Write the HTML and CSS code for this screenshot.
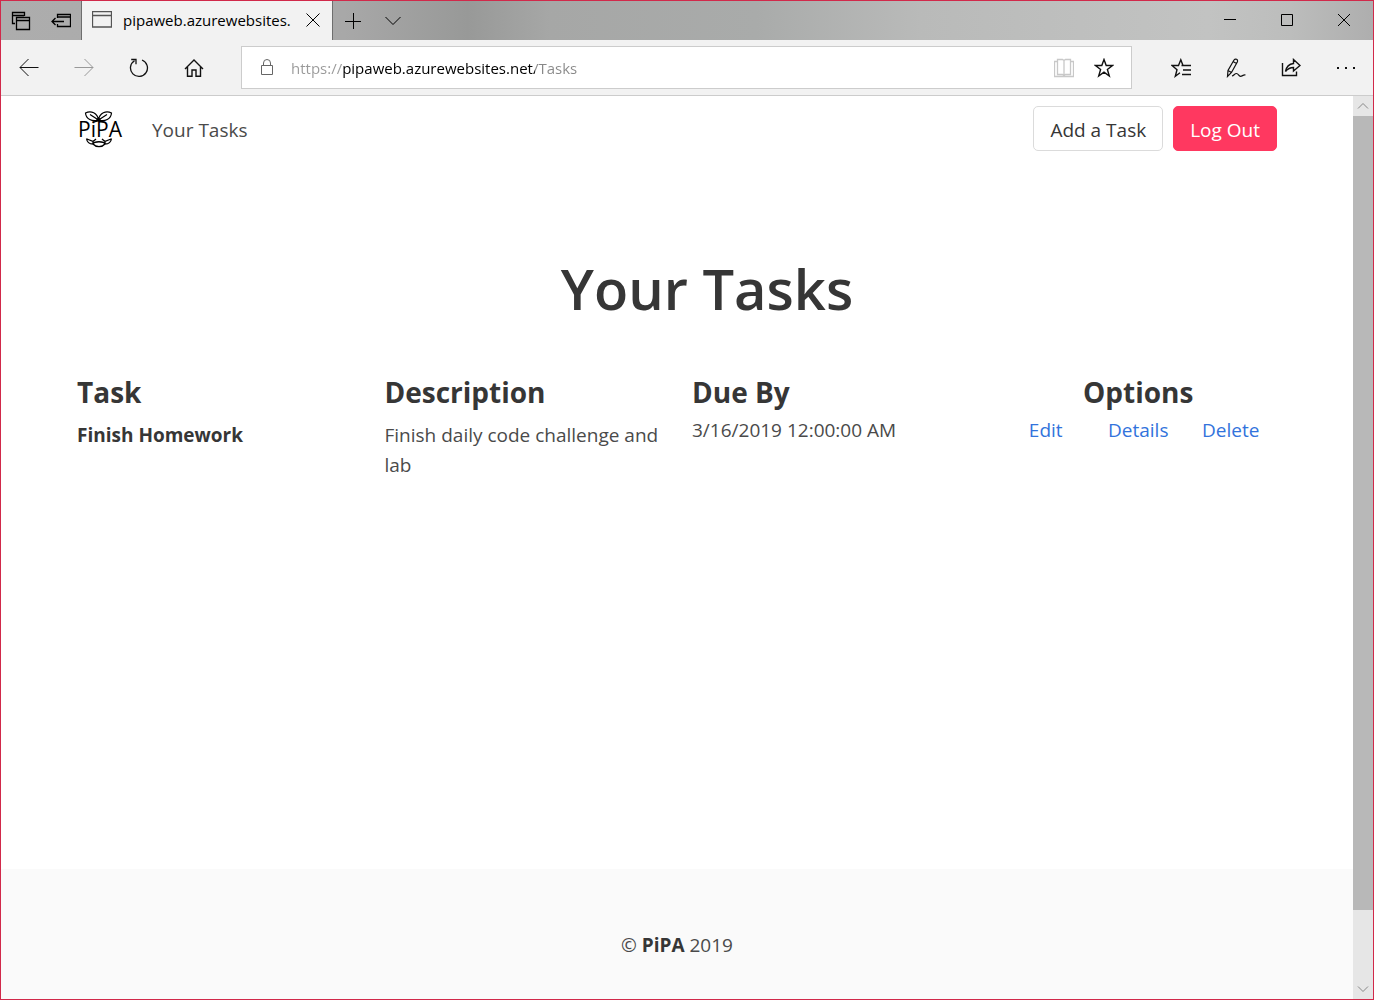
FILE: index.html
```html
<!DOCTYPE html>
<html lang="en">
<head>
<meta charset="utf-8">
<meta name="viewport" content="width=device-width, initial-scale=1">
<title>Your Tasks - PiPA</title>
<link rel="stylesheet" href="styles.css">
</head>
<body>
<div class="window">
  <div class="titlebar">
    <button class="tab-tool" aria-label="Tabs set aside"><svg width="20" height="20" viewBox="0 0 20 20"><path stroke-width="1.300" d="M4 12.500H1.500V1.500H13.500V5M1.500 4.500H13M5.500 6.500H18.500V18.500H5.500ZM5.500 9.500H18.500"/></svg></button>
    <button class="tab-tool" aria-label="Set tabs aside"><svg width="20" height="20" viewBox="0 0 20 20"><path stroke-width="1.300" d="M6.500 7V3.500H19.500V15.500H6.500V13M6.500 6H19.500M1 10.500H13M4.500 7L1 10.500L4.500 14"/></svg></button>
    <div class="tab">
      <svg class="thin" width="20" height="18" viewBox="0 0 20 18"><path stroke-width="1.300" d="M.5 .5H19.500V16H.5ZM.5 4.500H19.500"/></svg>
      <span class="tab-title">pipaweb.azurewebsites.</span>
      <button class="tab-close" aria-label="Close tab"><svg width="14" height="14" viewBox="0 0 14 14"><path d="M.5.5L13.500 13.500M13.500.5L.5 13.500"/></svg></button>
    </div>
    <button class="tab-tool" aria-label="New tab"><svg width="18" height="18" viewBox="0 0 18 18"><path d="M9.500 1V17M1 9.500H17"/></svg></button>
    <button class="tab-tool" aria-label="Tab previews"><svg width="16" height="10" viewBox="0 0 16 10"><path d="M.5 1L8 8.500L15.500 1"/></svg></button>
    <div class="window-controls">
      <button class="window-button" aria-label="Minimize"><svg width="12" height="12" viewBox="0 0 12 12"><path d="M0 5.500H12"/></svg></button>
      <button class="window-button" aria-label="Maximize"><svg width="12" height="12" viewBox="0 0 12 12"><path d="M.5.5H11.500V11.500H.5Z"/></svg></button>
      <button class="window-button" aria-label="Close"><svg width="12" height="12" viewBox="0 0 12 12"><path d="M0 0L12 12M12 0L0 12"/></svg></button>
    </div>
  </div>

  <div class="toolbar">
    <button class="tool" aria-label="Back"><svg width="20" height="20" viewBox="0 0 20 20"><path d="M19.500 9.500H1M9.500 1L1 9.500L9.500 18"/></svg></button>
    <button class="tool" aria-label="Forward" disabled><svg width="20" height="20" viewBox="0 0 20 20"><path d="M.5 9.500H19M10.500 1L19 9.500L10.500 18"/></svg></button>
    <button class="tool" aria-label="Refresh"><svg width="20" height="20" viewBox="0 0 20 20"><path stroke-width="1.300" d="M5.500 2.700A8.500 8.500 0 1 0 13 2M2.200 1.500H7V6.300"/></svg></button>
    <button class="tool" aria-label="Home"><svg width="20" height="20" viewBox="0 0 20 20"><path stroke-width="1.400" d="M1 11L10 2L19 11M3.500 9V18.300H8V12H12V18.300H16.500V9"/></svg></button>
    <div class="address">
      <svg class="lock" width="14" height="18" viewBox="0 0 14 18"><path d="M1.500 6.500H12.500V15.500H1.500ZM3.500 6V4A3.500 3.500 0 0 1 10.500 4V6"/></svg>
      <input class="url" type="text" aria-label="Address" value="https://pipaweb.azurewebsites.net/Tasks">
      <button class="address-button faint" aria-label="Reading view"><svg width="20" height="20" viewBox="0 0 20 20"><path stroke-width="1.300" d="M3.500 1.500H8.500L10 2.500L11.500 1.500H16.500V16.500H11.500L10 17.500L8.500 16.500H3.500ZM10 2.500V18M3 3.500H.5V18.500H19.500V3.500H17"/></svg></button>
      <button class="address-button" aria-label="Add to favorites"><svg width="20" height="20" viewBox="0 0 20 20"><path stroke-width="1.400" d="M10 1.500L12.200 7.500H18.500L13.400 11.500L15.300 18L10 14.200L4.700 18L6.600 11.500L1.500 7.500H7.800Z"/></svg></button>
    </div>
    <button class="tool" aria-label="Favorites"><svg width="20" height="20" viewBox="0 0 20 20"><path stroke-width="1.400" d="M12 7.500L9.800 1.800L7.500 7.500H1L6 11.700L4.300 18.200L9 14.800M10.500 7.500H20M12 12H20M11 16.500H20"/></svg></button>
    <button class="tool" aria-label="Add notes"><svg width="20" height="20" viewBox="0 0 20 20"><path stroke-width="1.200" d="M1.500 18.500L2 12.500L8 2C9.500 0 12.300 1.500 11.300 4L5.500 14.500L1.500 18.500ZM7 3.500L10.500 5.500M2 12.500L5.500 14.500M6 18C8 17.500 8.500 15.500 10.500 15.500S12.500 18.300 14.500 18.300C16.500 18.300 17 16.500 19.500 17"/></svg></button>
    <button class="tool" aria-label="Share"><svg width="20" height="20" viewBox="0 0 20 20"><path stroke-width="1.400" d="M1.500 5V17.500H15.500V13.500M4.500 13.500C5.500 8 8 6 12.500 5.500V1.500L19 7.500L12.500 13V9.500C8.500 9.500 6.500 11 4.500 13.500Z"/></svg></button>
    <button class="tool" aria-label="Settings and more"><svg width="20" height="20" viewBox="0 0 20 20"><path class="solid" d="M1 9H3V11H1ZM9 9H11V11H9ZM17 9H19V11H17Z"/></svg></button>
  </div>

  <div class="viewport">
    <div class="page">
      <header class="container navbar">
        <a class="brand" href="#" aria-label="PiPA home">
          <svg width="46" height="38" viewBox="0 0 46 38">
            <path stroke-width="1.200" d="M21.500 10C15 12 9 9 8.500 3C14 0 20.500 3 21.500 10ZM21.500 10C22.500 3 29 0 34.500 3C34 9 28 12 21.500 10ZM13 4.500L21.500 10L30 4.500"/>
            <path class="solid" d="M15 13L19.500 9.500L21.500 7L23.500 9.500L28 13L21.500 11.500Z"/>
            <text x="23" y="27" text-anchor="middle">PiPA</text>
            <path stroke-width="1.300" d="M9.500 28.500C10 32 12.500 34 16 34C19 37.500 25 37.500 28 34C31.500 34 34 32 34.500 28.500M10 29L16 31.500V34M34 29L28 31.500V34M16 31.500L19 29M28 31.500L25 29M16 34C17 31 27 31 28 34"/>
          </svg>
        </a>
        <a class="nav-link" href="#">Your Tasks</a>
        <div class="nav-buttons">
          <button class="button">Add a Task</button>
          <button class="button danger">Log Out</button>
        </div>
      </header>
      <main class="container main">
        <h1 class="title">Your Tasks</h1>
        <table class="tasks">
          <thead>
            <tr><th>Task</th><th>Description</th><th>Due By</th><th class="options-head">Options</th></tr>
          </thead>
          <tbody>
            <tr>
              <td class="text-cell"><strong>Finish Homework</strong></td>
              <td class="text-cell">Finish daily code challenge and lab</td>
              <td>3/16/2019 12:00:00 AM</td>
              <td><div class="options"><a href="#">Edit</a><a href="#">Details</a><a href="#">Delete</a></div></td>
            </tr>
          </tbody>
        </table>
      </main>
      <footer class="footer">© <strong>PiPA</strong> 2019</footer>
    </div>
    <div class="scrollbar">
      <button class="scroll-button" aria-label="Scroll up"><svg width="12" height="8" viewBox="0 0 12 8"><path d="M1 6.500L6 1.500L11 6.500"/></svg></button>
      <div class="track"><div class="thumb"></div></div>
      <button class="scroll-button" aria-label="Scroll down"><svg width="12" height="8" viewBox="0 0 12 8"><path d="M1 1.500L6 6.500L11 1.500"/></svg></button>
    </div>
  </div>
</div>
</body>
</html>
```
FILE: styles.css
```css
*, *::before, *::after { box-sizing: border-box; }

body {
  margin: 0;
  font-family: "Open Sans", "Noto Sans", sans-serif;
  font-size: 19px;
  line-height: 30px;
  color: #4a4a4a;
  background: #fff;
}

button, input { font: inherit; color: inherit; margin: 0; padding: 0; border: 0; background: none; }
a { color: #3273dc; text-decoration: none; }
strong { color: #363636; font-weight: 700; }
svg { display: block; flex: none; fill: none; stroke: currentColor; }
.solid { fill: currentColor; stroke: none; }

.window {
  display: flex;
  flex-direction: column;
  min-height: 100vh;
  border: 1px solid #d1294a;
}

/* Browser frame */
.titlebar {
  display: flex;
  height: 39px;
  color: #000;
  background: linear-gradient(90deg, #adadad 0%, #a8a8a8 25%, #989998 34%, #a6a7a6 40%, #a9abaa 55%, #b9bab9 67%, #c2c3c2 88%, #bcbdbc 94%, #aeaeae 100%);
}
.tab-tool {
  display: flex;
  align-items: center;
  justify-content: center;
  width: 40px;
}
.tab {
  display: flex;
  align-items: center;
  width: 252px;
  padding: 0 10px 2px;
  background: #f2f2f2;
  border: solid #6e6e6e;
  border-width: 0 1px;
}
.thin { color: #555; }
.tab-title { margin-left: 11px; font-size: 15px; white-space: nowrap; }
.tab-close { margin-left: auto; padding: 2px; }
.window-controls { display: flex; margin-left: auto; padding: 0 1px 1px 0; }
.window-button {
  display: flex;
  align-items: center;
  justify-content: center;
  width: 57px;
}

.toolbar {
  display: flex;
  align-items: center;
  height: 56px;
  color: #111;
  background: #f2f2f2;
  border-bottom: 1px solid #ccc;
}
.tool {
  display: flex;
  flex: none;
  align-items: center;
  justify-content: center;
  width: 55px;
  height: 40px;
}
.tool:disabled { color: #999; }
.address {
  display: flex;
  flex: 1;
  align-items: center;
  height: 43px;
  margin: 0 21px 0 20px;
  padding: 0 7px 0 18px;
  background: #fff;
  border: 1px solid #ccc;
}
.lock { color: #666; }
.url {
  flex: 1;
  min-width: 0;
  height: 30px;
  margin-left: 17px;
  font-size: 15px;
  color: transparent;
  caret-color: #000;
  background: linear-gradient(90deg, #999 52px, #000 52px, #000 244px, #888 244px);
  -webkit-background-clip: text;
  background-clip: text;
}
.address-button {
  display: flex;
  align-items: center;
  justify-content: center;
  width: 40px;
  height: 40px;
}
.faint { color: #c8c8c8; }

/* Page */
.viewport { display: flex; flex: 1; }
.page { display: flex; flex: 1; flex-direction: column; min-width: 0; }
.container { width: 100%; max-width: 1200px; margin: 0 auto; }

.navbar { display: flex; align-items: center; height: 65px; }
.brand { color: #000; }
.brand text {
  font: 400 21px "Open Sans", "Noto Sans", sans-serif;
  fill: currentColor;
  stroke: none;
}
.nav-link { margin-left: 29px; padding-top: 2px; color: #4a4a4a; }
.nav-buttons { display: flex; gap: 10px; margin-left: auto; }
.button {
  height: 45px;
  padding: 2px 16px 0;
  color: #363636;
  border: 1px solid #dbdbdb;
  border-radius: 5px;
  background: #fff;
}
.danger { color: #fff; background: #ff3860; border-color: #ff3860; }

.main { flex: 1; }
.title {
  margin: 91px 0 0;
  padding-left: 60px;
  text-align: center;
  font-size: 56px;
  font-weight: 600;
  line-height: 72px;
  color: #363636;
}
.tasks {
  width: calc(100% + 30px);
  margin: 50px -15px 0;
  table-layout: fixed;
  border-spacing: 0;
}
.tasks th {
  padding: 0 15px;
  text-align: left;
  font-size: 28px;
  line-height: 36px;
  color: #363636;
}
.tasks .options-head { text-align: center; }
.tasks td { padding: 5px 15px 0; vertical-align: top; }
.tasks .text-cell { padding-top: 10px; }
.options { display: grid; grid-template-columns: repeat(3, 1fr); text-align: center; }

.footer { padding: 61px 30px 39px; text-align: center; background: #fafafa; }

.scrollbar { display: flex; flex-direction: column; width: 20px; background: #e6e6e6; }
.scroll-button {
  display: flex;
  align-items: center;
  justify-content: center;
  height: 20px;
  color: #888;
}
.track { flex: 1; }
.thumb { height: 92%; background: #b8b8b8; }
```
